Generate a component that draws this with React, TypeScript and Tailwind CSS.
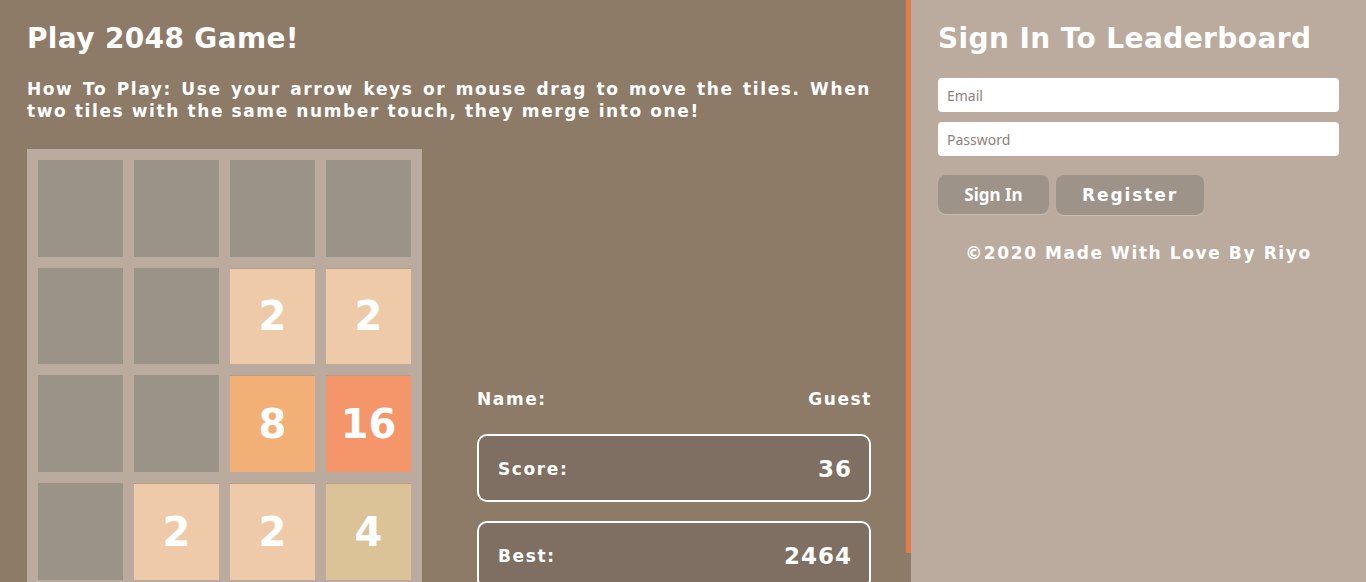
import React from "react";

const tiles: (number | null)[][] = [
  [null, null, null, null],
  [null, null, 2, 2],
  [null, null, 8, 16],
  [null, 2, 2, 4],
];

function tileClass(v: number | null): string {
  if (v === null) return "bg-[#9c9388]";
  if (v === 2) return "bg-[#efcaa9] border-t border-[#b89e88]";
  if (v === 4) return "bg-[#dcc397] border-t border-[#b89e88]";
  if (v === 8) return "bg-[#f2b077] border-t border-[#b89e88]";
  return "bg-[#f4956a] border-t border-[#b89e88]";
}

export default function App() {
  const dv = { fontFamily: '"DejaVu Sans", "Liberation Sans", sans-serif' };
  return (
    <div className="flex w-[1366px] h-[582px] overflow-hidden bg-[#8d7a67] text-white" style={dv}>
      <div className="w-[911px] shrink-0 bg-[#8d7a67]">
        <div className="h-[553px] w-[911px] border-r-[5px] border-[#e57b4b] pl-[27px] pr-[35px] pt-[22px]">
          <h1 className="text-[28px] leading-[34px] font-bold tracking-[0.35px]">Play 2048 Game!</h1>
          <p className="mt-[22px] text-[17px] leading-[22px] font-bold tracking-[1.6px] text-justify">
            How To Play: Use your arrow keys or mouse drag to move the tiles. When two tiles with the same number touch, they merge into one!
          </p>
          <div className="mt-[27px] flex items-start gap-[55px]">
            <div className="w-[395px] shrink-0 bg-[#baab9e] p-[11px] grid grid-cols-4 gap-[11px]">
              {tiles.flat().map((v, i) => (
                <div
                  key={i}
                  className={`h-[96.67px] flex items-center justify-center text-[40px] font-bold ${tileClass(v)}`}
                >
                  {v ?? ""}
                </div>
              ))}
            </div>
            <div className="flex-1 pt-[239px]">
              <div className="flex justify-between text-[17px] leading-[22px] font-bold tracking-[1.6px]">
                <span>Name:</span>
                <span className="mr-[-1px]">Guest</span>
              </div>
              <div className="mt-[24px] h-[68px] rounded-[10px] border-2 border-white bg-[#7e6f62] flex items-center justify-between pl-[19px] pr-[17px] pt-[3px]">
                <span className="text-[17px] font-bold tracking-[1.6px]">Score:</span>
                <span className="text-[23px] font-bold tracking-[1px]">36</span>
              </div>
              <div className="mt-[19px] h-[68px] rounded-[10px] border-2 border-white bg-[#7e6f62] flex items-center justify-between pl-[19px] pr-[17px] pt-[3px]">
                <span className="text-[17px] font-bold tracking-[1.6px]">Best:</span>
                <span className="text-[23px] font-bold tracking-[1px]">2464</span>
              </div>
            </div>
          </div>
        </div>
      </div>
      <div className="flex-1 bg-[#baab9e] px-[27px] pt-[22px]">
        <h2 className="text-[28px] leading-[34px] font-bold tracking-[0.4px]">Sign In To Leaderboard</h2>
        <div className="mt-[22px] flex flex-col gap-[10px]">
          <input
            placeholder="Email"
            className="h-[34px] w-full rounded-[4px] bg-white px-[9px] text-[14px] text-[#333] placeholder:text-[#8f827a] outline-none"
            style={{ fontFamily: '"Noto Sans", "Open Sans", sans-serif' }}
          />
          <input
            placeholder="Password"
            className="h-[34px] w-full rounded-[4px] bg-white px-[9px] text-[14px] text-[#333] placeholder:text-[#8f827a] outline-none"
            style={{ fontFamily: '"Noto Sans", "Open Sans", sans-serif' }}
          />
        </div>
        <div className="mt-[19px] flex gap-[7px]">
          <button
            className="h-[39px] w-[111px] rounded-[8px] bg-[#9d9389] text-[17px] font-bold text-white shadow-[0_1px_1px_rgba(255,255,255,0.25)]"
            style={{ fontFamily: '"Noto Sans", "Open Sans", sans-serif' }}
          >
            Sign In
          </button>
          <button className="h-[40px] w-[148px] rounded-[8px] bg-[#9d9389] pt-[2px] text-[17px] font-bold tracking-[1.9px] text-white shadow-[0_1px_1px_rgba(255,255,255,0.25)]">
            Register
          </button>
        </div>
        <p className="mt-[27px] text-center text-[17px] leading-[22px] font-bold tracking-[1.6px]">
          ©2020 Made With Love By Riyo
        </p>
      </div>
    </div>
  );
}
